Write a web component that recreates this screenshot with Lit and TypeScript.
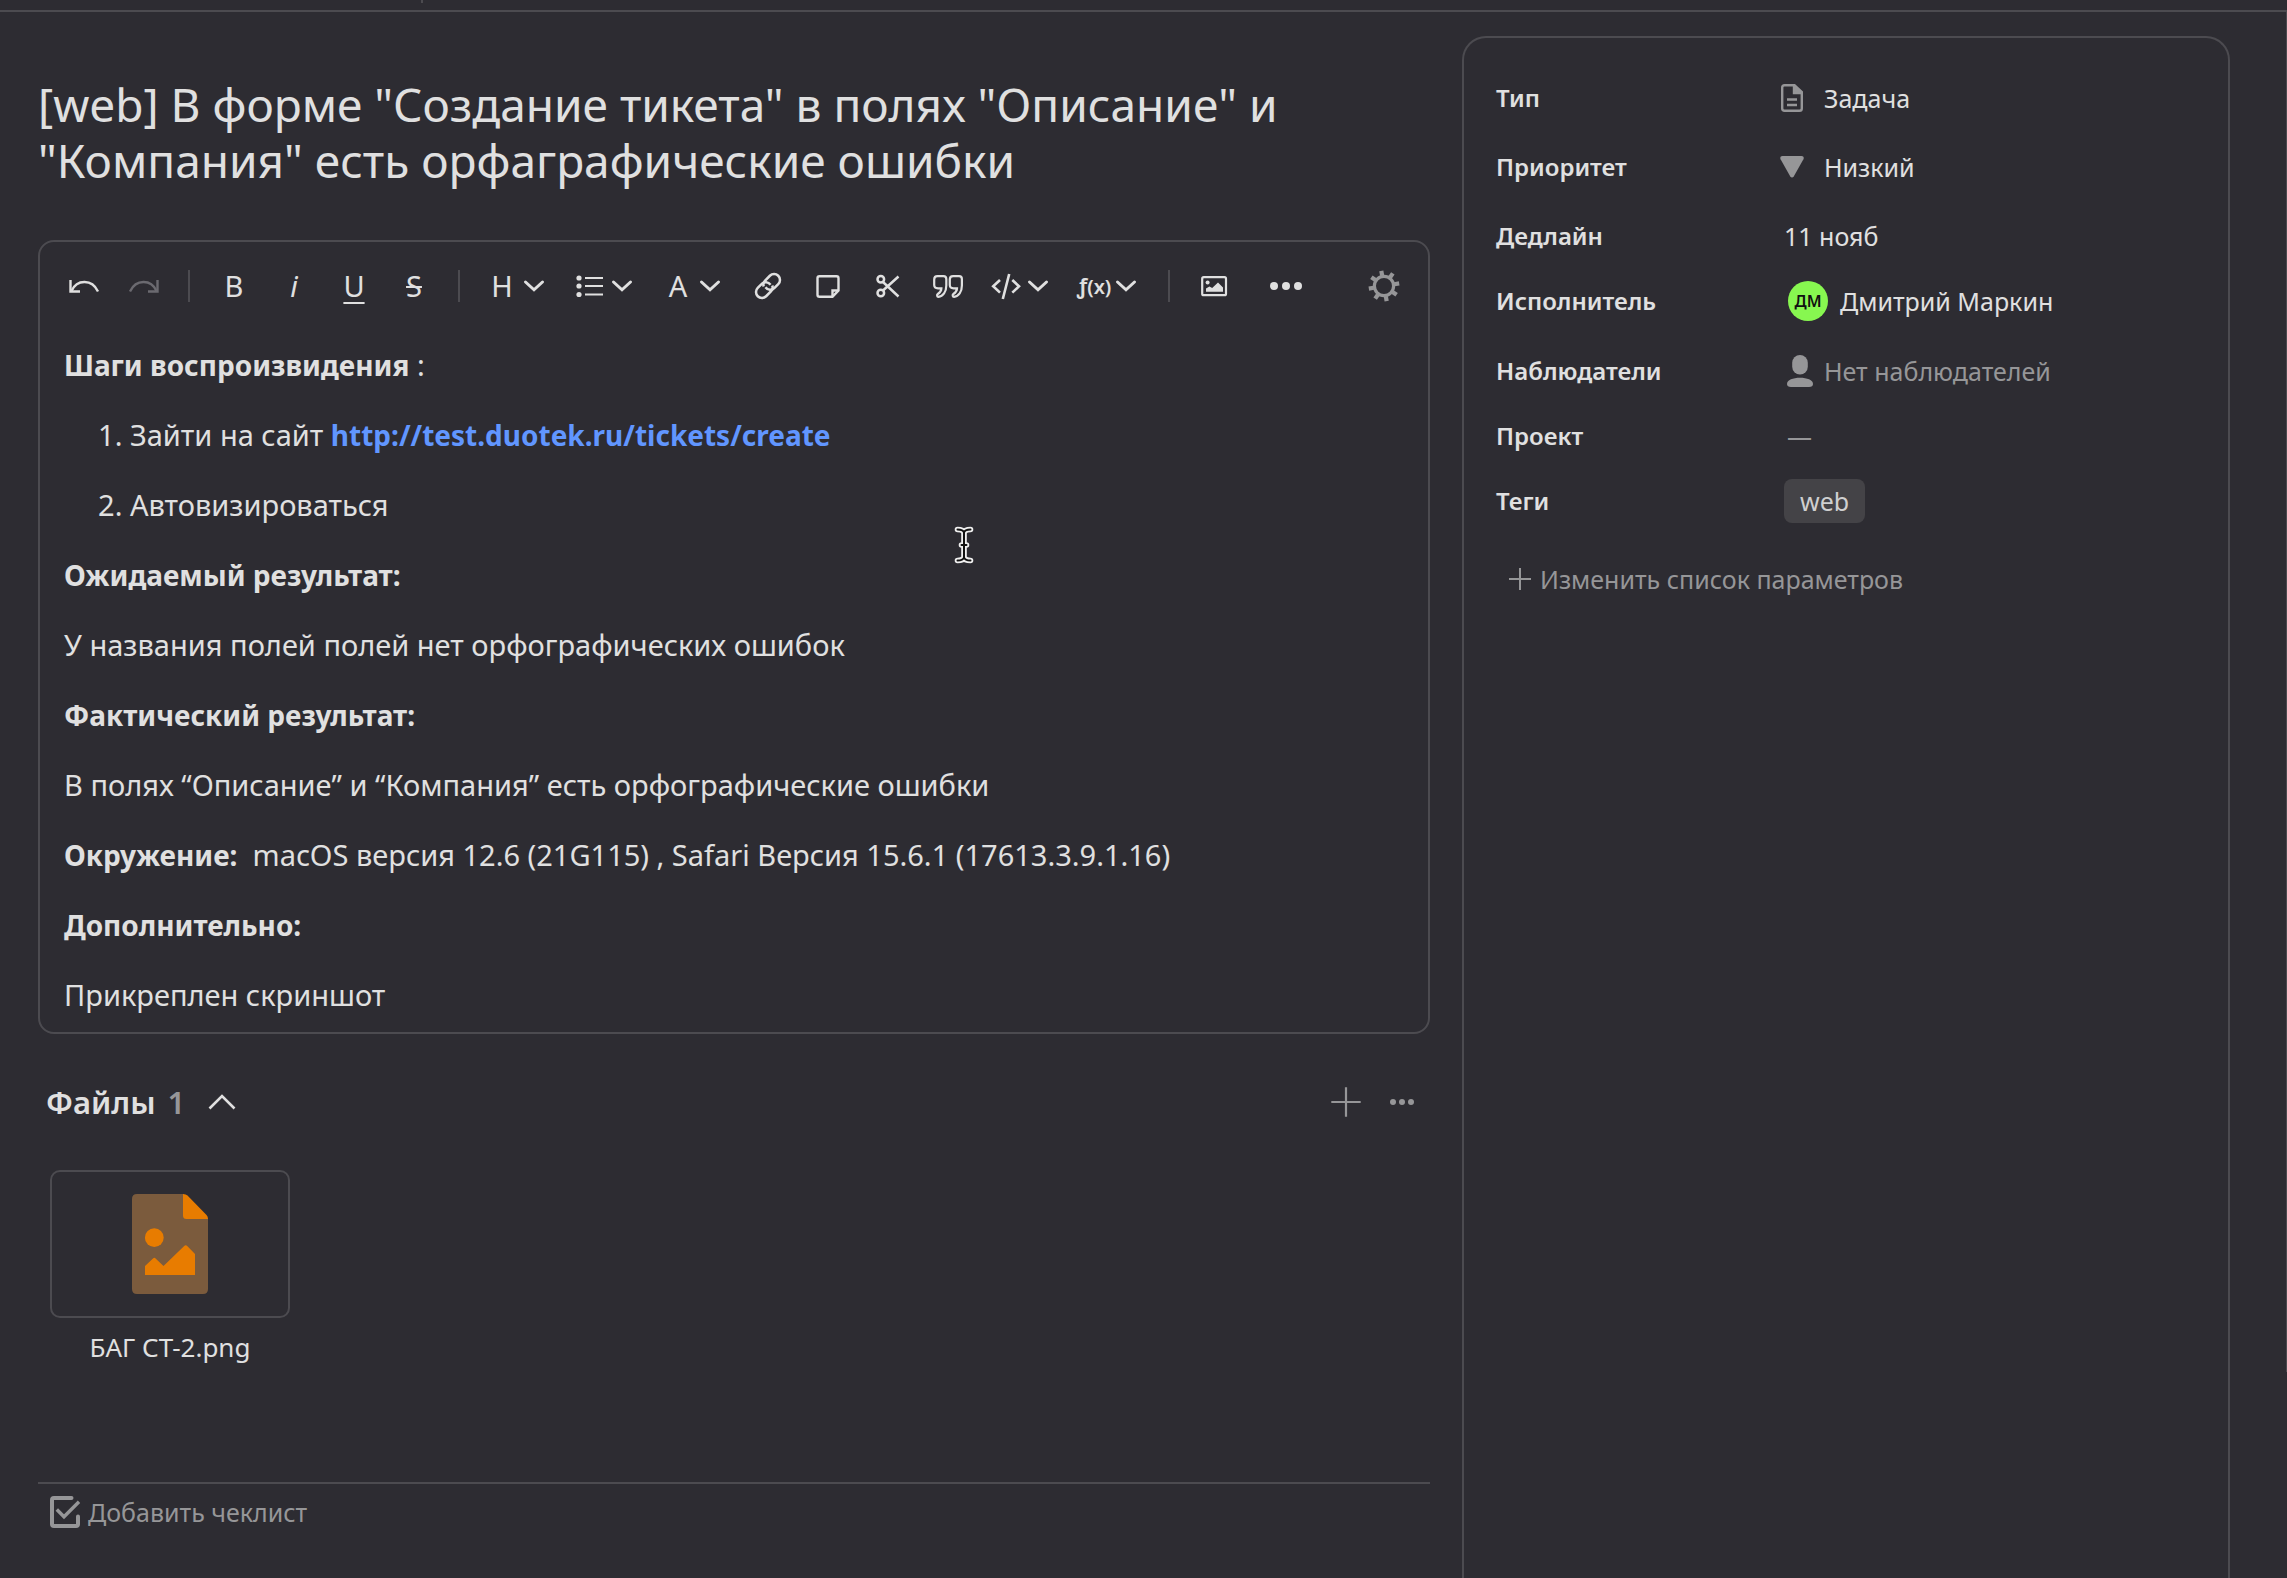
import { LitElement, html, css, svg, nothing, TemplateResult } from "lit";
import { customElement, property, state } from "lit/decorators.js";

const strokeIcon = (body: unknown, size = 32, width = 2) => html`<svg
  width=${size} height=${size} viewBox="0 0 ${size} ${size}" fill="none"
  stroke="currentColor" stroke-width=${width} aria-hidden="true">${body}</svg>`;

const icons = {
  undo: strokeIcon(svg`<path d="M2.5 10V21.5H12"/><path d="M3.5 21C9 9 24 9 30 21.5"/>`, 32, 2.4),
  redo: strokeIcon(svg`<path d="M29.5 10V21.5H20"/><path d="M28.5 21C23 9 8 9 2 21.5"/>`, 32, 2.4),
  list: strokeIcon(svg`
    <g fill="currentColor" stroke="none"><circle cx="5" cy="8" r="2.6"/><circle cx="5" cy="16" r="2.6"/><circle cx="5" cy="24.5" r="2.6"/></g>
    <path d="M11 8H29M11 16H29M11 24.5H29"/>`, 32, 2.2),
  link: html`<svg width="30" height="30" viewBox="0 0 24 24" fill="none" stroke="currentColor" stroke-width="2" aria-hidden="true">
    <path d="M10 13a4.6 4.6 0 0 0 7.2.5l3-3a4.6 4.6 0 0 0-6.7-6.7l-4 4a4.6 4.6 0 0 0-.9 4.6"/>
    <path d="M14 11a4.6 4.6 0 0 0-7.2-.5l-3 3a4.6 4.6 0 0 0 6.7 6.7l4-4a4.6 4.6 0 0 0 .9-4.6"/></svg>`,
  note: strokeIcon(svg`<path d="M7.5 6.3H24.5Q26.5 6.3 26.5 8.3V20.5L20.5 26.7H7.5Q5.5 26.7 5.5 24.7V8.3Q5.5 6.3 7.5 6.3Z"/><path d="M26.5 20.5H20.5V26.7"/>`, 32, 2.4),
  cut: strokeIcon(svg`<circle cx="8.8" cy="9.3" r="3.3"/><circle cx="8.8" cy="23" r="3.3"/><path d="M11 12L26.5 26.5M11 20.5L26.5 6.5"/>`, 32, 2.5),
  quote: strokeIcon(svg`
    <path d="M5.5 6.2H11.5Q14.3 6.2 14.3 9V15.5C14.3 22 11 26.3 6.4 26.8C5 26.8 4.6 24.8 5.8 24C8 22.6 9.3 20.8 9.4 18.4H6Q2.2 18.2 2.2 15V9.5Q2.2 6.2 5.5 6.2Z"/>
    <path transform="translate(15.6 0)" d="M5.5 6.2H11.5Q14.3 6.2 14.3 9V15.5C14.3 22 11 26.3 6.4 26.8C5 26.8 4.6 24.8 5.8 24C8 22.6 9.3 20.8 9.4 18.4H6Q2.2 18.2 2.2 15V9.5Q2.2 6.2 5.5 6.2Z"/>`, 32, 2.2),
  code: strokeIcon(svg`<path d="M10 10L3.2 16.3L10 22.6M22.3 10L29 16.3L22.3 22.6M19.2 4L12.8 29"/>`, 32, 2.6),
  image: strokeIcon(svg`<rect x="4.2" y="7.2" width="23.8" height="18" rx="1.5"/>
    <g fill="currentColor" stroke="none"><circle cx="9.6" cy="12.6" r="2"/><path d="M8 21.8V18.6L11.4 16.6 14.2 18 20 12.5 25 17.5V21.8Z"/></g>`, 32, 2.2),
  dots: html`<svg width="32" height="8" viewBox="0 0 32 8" fill="currentColor" aria-hidden="true"><circle cx="4" cy="4" r="4"/><circle cx="16" cy="4" r="4"/><circle cx="28" cy="4" r="4"/></svg>`,
  dotsSmall: html`<svg width="24" height="6" viewBox="0 0 24 6" fill="currentColor" aria-hidden="true"><circle cx="3" cy="3" r="3"/><circle cx="12" cy="3" r="3"/><circle cx="21" cy="3" r="3"/></svg>`,
  gear: strokeIcon(svg`<circle cx="16" cy="16" r="9.6" stroke-width="3.2"/>
    <g stroke-width="4.2">${[0, 45, 90, 135, 180, 225, 270, 315].map(
      (a) => svg`<path d="M16 5.6V0.6" transform="rotate(${a - 10} 16 16)"/>`)}</g>`),
  chevronDown: html`<svg class="chevron" width="24" height="14" viewBox="0 0 24 14" fill="none" stroke="currentColor" stroke-width="3" stroke-linecap="round" aria-hidden="true"><path d="M3.5 3L12 10.8L20.5 3"/></svg>`,
  chevronUp: html`<svg width="28" height="18" viewBox="0 0 28 18" fill="none" stroke="currentColor" stroke-width="2.6" aria-hidden="true"><path d="M1.5 15.5L14 3L26.5 15.5"/></svg>`,
  plus: strokeIcon(svg`<path d="M16 1.3V30.7M1.3 16H30.7"/>`, 32, 2.2),
  plusSmall: strokeIcon(svg`<path d="M12 1V23M1 12H23"/>`, 24, 2),
  task: html`<svg width="24" height="30" viewBox="0 0 24 30" fill="none" stroke="currentColor" stroke-width="2.4" aria-hidden="true">
    <path d="M4.5 2.2H14.5L21.8 9V25.5Q21.8 27.8 19.5 27.8H4.5Q2.2 27.8 2.2 25.5V4.5Q2.2 2.2 4.5 2.2Z"/>
    <path d="M14 2V10H22" fill="currentColor"/><path d="M7 16.5H17M7 22H17"/></svg>`,
  low: html`<svg width="26" height="24" viewBox="0 0 26 24" fill="currentColor" aria-hidden="true"><path d="M2.6 0H23.4Q26.6 0.4 25.4 3.5L15 22Q13 24.6 11 22L0.6 3.5Q-0.6 0.4 2.6 0Z"/></svg>`,
  person: html`<svg width="26" height="32" viewBox="0 0 26 32" fill="currentColor" aria-hidden="true"><rect x="5.2" y="0" width="15.6" height="19.5" rx="7.8"/><path d="M13 22.8C20 22.8 26 25 26 29Q26 32 22 32H4Q0 32 0 29C0 25 6 22.8 13 22.8Z"/></svg>`,
  checklist: html`<svg width="31" height="32" viewBox="0 0 31 32" fill="none" stroke="currentColor" stroke-width="4" aria-hidden="true"><path stroke-linecap="round" d="M21.5 2H4Q2 2 2 4V28Q2 30 4 30H26Q28 30 28 28V20.5"/><path stroke-width="3.4" d="M6.8 13.5L14 20.8L29 5.8"/></svg>`,
  picture: html`<svg width="76" height="100" viewBox="0 0 76 100" aria-hidden="true">
    <path fill="#7b5b3d" d="M5 0H51L76 25V95Q76 100 71 100H5Q0 100 0 95V5Q0 0 5 0Z"/>
    <path fill="#e87c00" d="M51 0Q54 0 55.5 1.5L74.5 21Q76 22.5 76 25H54.5Q51 25 51 21.5Z"/>
    <circle cx="22.3" cy="43.7" r="9.4" fill="#e87c00"/>
    <path fill="#e87c00" d="M13 81V72L21 64.4Q22.3 63.2 23.6 64.4L31.5 72L52.2 52Q53.7 50.6 55.2 52L63 60V81Z"/></svg>`,
  ibeam: html`<svg width="20" height="38" viewBox="0 0 20 38" fill="none" stroke-linecap="round" stroke-linejoin="round" aria-hidden="true">
    <path stroke="#f0f0f0" stroke-width="5.6" d="M3.5 3.5Q9 3.5 10 6.5Q11 3.5 16.5 3.5M10 6.5V31.5M7.5 19H12.5M3.5 34.5Q9 34.5 10 31.5Q11 34.5 16.5 34.5"/>
    <path stroke="#111" stroke-width="2" d="M3.5 3.5Q9 3.5 10 6.5Q11 3.5 16.5 3.5M10 6.5V31.5M7.5 19H12.5M3.5 34.5Q9 34.5 10 31.5Q11 34.5 16.5 34.5"/></svg>`,
};

type Tool = { label: string; face: unknown; menu?: boolean; disabled?: boolean; wide?: boolean } | "divider";

const tools: Tool[] = [
  { label: "Отменить", face: icons.undo },
  { label: "Повторить", face: icons.redo, disabled: true },
  "divider",
  { label: "Жирный", face: "B" },
  { label: "Курсив", face: html`<i>i</i>` },
  { label: "Подчёркнутый", face: html`<span class="under">U</span>` },
  { label: "Зачёркнутый", face: html`<span class="strike">S</span>` },
  "divider",
  { label: "Заголовок", face: "H", menu: true },
  { label: "Список", face: icons.list, menu: true },
  { label: "Цвет текста", face: "A", menu: true },
  { label: "Ссылка", face: icons.link },
  { label: "Заметка", face: icons.note },
  { label: "Кат", face: icons.cut },
  { label: "Цитата", face: icons.quote },
  { label: "Код", face: icons.code, menu: true },
  { label: "Формула", face: html`<span class="fx">ƒ<small>(x)</small></span>`, menu: true },
  "divider",
  { label: "Изображение", face: icons.image },
  { label: "Ещё", face: icons.dots, wide: true },
];

@customElement("editor-toolbar")
export class EditorToolbar extends LitElement {
  static styles = css`
    :host { display: flex; align-items: center; padding: 14px 14px 0; color: #e0e0e0; }
    button {
      display: flex; align-items: center; justify-content: center;
      flex: none; width: 60px; height: 60px; padding: 0; border: 0;
      background: none; color: inherit; font: 400 29px/40px "Noto Sans", sans-serif; cursor: pointer;
    }
    button:disabled { color: #6b6a70; }
    button.menu { width: 88px; padding: 0 14px 0 8px; justify-content: flex-start; }
    button.wide { width: 84px; }
    .face { display: flex; flex: none; justify-content: center; width: 40px; }
    .under { text-decoration: underline 2px; text-underline-offset: 5px; }
    .strike { text-decoration: line-through 2px; }
    .fx { font-weight: 600; font-size: 22px; line-height: 36px; white-space: nowrap; }
    small { font-size: 20px; }
    .chevron { flex: none; }
    .divider { flex: none; width: 2px; height: 32px; margin: 0 14px; background: #4c4b50; }
    .gear { margin-left: auto; color: #969698; }
  `;

  render() {
    return html`
      ${tools.map((t) =>
        t === "divider"
          ? html`<span class="divider"></span>`
          : html`<button class=${t.menu ? "menu" : t.wide ? "wide" : "plain"} aria-label=${t.label} ?disabled=${t.disabled}>
              <span class="face">${t.face}</span>${t.menu ? icons.chevronDown : nothing}
            </button>`,
      )}
      <button class="gear" aria-label="Настройки">${icons.gear}</button>
    `;
  }
}

type Param = { name: string; kind: string; icon?: TemplateResult; text: string; spacing?: string };

const params: Param[] = [
  { name: "Тип", kind: "icon", icon: icons.task, text: "Задача", spacing: "after" },
  { name: "Приоритет", kind: "icon", icon: icons.low, text: "Низкий", spacing: "after" },
  { name: "Дедлайн", kind: "date", text: "11 нояб" },
  { name: "Исполнитель", kind: "user", icon: html`<span class="avatar">ДМ</span>`, text: "Дмитрий Маркин" },
  { name: "Наблюдатели", kind: "empty", icon: icons.person, text: "Нет наблюдателей", spacing: "before" },
  { name: "Проект", kind: "empty", text: "—" },
  { name: "Теги", kind: "tag", text: "web" },
];

@customElement("ticket-params")
export class TicketParams extends LitElement {
  static styles = css`
    :host {
      display: block; box-sizing: border-box; padding: 40px 32px 0;
      border: 2px solid #4c4b50; border-bottom: 0; border-radius: 24px 24px 0 0;
      color: #e0e0e0; font: 400 25px/40px "Noto Sans", sans-serif;
    }
    dl { display: flex; flex-direction: column; gap: 25px; margin: 0 0 38px; }
    .row { display: grid; grid-template: 40px / 284px minmax(0, 1fr); }
    .after { margin-bottom: 4px; }
    .before { margin-top: 5px; }
    dt { font-size: 24px; font-weight: 600; }
    dd { display: flex; align-items: center; margin: 0; }
    .glyph { display: flex; flex: none; align-items: center; }
    .icon .glyph { justify-content: center; width: 24px; margin-right: 20px; color: #969698; }
    .date, .tag { padding-left: 4px; }
    .user { padding-left: 8px; gap: 12px; }
    .empty { padding-left: 7px; gap: 11px; color: #969698; }
    .avatar {
      display: grid; place-items: center; width: 40px; height: 40px; border-radius: 50%;
      background: #87f750; color: #111; font-size: 16px; font-weight: 600;
    }
    .tag .text { padding: 2px 16px; border-radius: 8px; background: #444347; color: #cfcfd0; }
    button {
      display: flex; align-items: center; gap: 8px; padding: 0 0 0 12px; border: 0;
      background: none; color: #969698; font: inherit; cursor: pointer;
    }
  `;

  render() {
    return html`
      <dl>
        ${params.map((p) => html`
          <div class="row ${p.spacing ?? ""}">
            <dt>${p.name}</dt>
            <dd class=${p.kind}>
              ${p.icon ? html`<span class="glyph">${p.icon}</span>` : nothing}<span class="text">${p.text}</span>
            </dd>
          </div>`)}
      </dl>
      <button>${icons.plusSmall}Изменить список параметров</button>
    `;
  }
}

@customElement("ticket-files")
export class TicketFiles extends LitElement {
  @property({ attribute: false }) files: string[] = [];
  @state() private open = true;

  static styles = css`
    :host { display: block; color: #e0e0e0; font: 400 26px/32px "Noto Sans", sans-serif; }
    button { display: grid; place-items: center; width: 40px; height: 40px; padding: 0; border: 0; background: none; color: inherit; cursor: pointer; }
    header { display: flex; align-items: center; padding: 0 8px; }
    h2 { margin: 0; font-size: 31px; line-height: 38px; font-weight: 600; }
    .count { margin-left: 12px; color: #969698; }
    .toggle { margin-left: 17px; }
    .actions { display: flex; gap: 16px; margin-left: auto; color: #969698; }
    ul { display: flex; flex-wrap: wrap; gap: 24px; margin: 48px 0 0; padding: 0 12px; list-style: none; }
    a { display: flex; flex-direction: column; gap: 13px; width: 240px; color: inherit; text-align: center; text-decoration: none; }
    .preview { display: grid; place-items: center; box-sizing: border-box; height: 148px; border: 2px solid #4c4b50; border-radius: 10px; }
  `;

  render() {
    return html`
      <header>
        <h2>Файлы<span class="count">${this.files.length}</span></h2>
        <button class="toggle" aria-label="Свернуть" @click=${() => (this.open = !this.open)}>${icons.chevronUp}</button>
        <div class="actions">
          <button aria-label="Добавить файл">${icons.plus}</button>
          <button aria-label="Ещё">${icons.dotsSmall}</button>
        </div>
      </header>
      ${this.open
        ? html`<ul>${this.files.map((f) => html`<li><a href="#file"><span class="preview">${icons.picture}</span>${f}</a></li>`)}</ul>`
        : nothing}
    `;
  }
}

@customElement("app-root")
export class AppRoot extends LitElement {
  static styles = css`
    :host {
      display: flex; flex-direction: column; position: relative; min-height: 100vh;
      background: #2d2c32; color: #e0e0e0; font: 400 29px/40px "Noto Sans", sans-serif;
    }
    .topbar { box-sizing: border-box; height: 12px; padding-left: 421px; border-bottom: 2px solid #4c4b50; }
    .tick { display: block; width: 2px; height: 3px; background: #4c4b50; }
    .layout {
      flex: 1; display: grid; grid-template-columns: minmax(0, 29fr) minmax(0, 16fr);
      column-gap: 32px; padding: 24px 57px 0 38px;
    }
    h1 { margin: 40px 0 52px; font-size: 46px; line-height: 56px; font-weight: 400; }
    .editor { position: relative; margin-bottom: 48px; border: 2px solid #4c4b50; border-radius: 16px; }
    .text { display: flex; flex-direction: column; gap: 30px; padding: 29px 24px 17px; outline: none; }
    p, ol { margin: 0; }
    ol { display: flex; flex-direction: column; gap: 30px; padding-left: 66px; }
    b, .text a { font-size: 28px; font-weight: 700; }
    .text a { color: #6196ff; text-decoration: none; }
    .cursor { position: absolute; left: 914px; top: 284px; line-height: 0; pointer-events: none; }
    .checklist { margin-top: 119px; padding: 12px; border-top: 2px solid #4c4b50; }
    .checklist button {
      display: flex; align-items: center; gap: 7px; padding: 0; border: 0; background: none;
      color: #969698; font: 400 25px/32px "Noto Sans", sans-serif; cursor: pointer;
    }
    .thumb { position: absolute; top: 12px; right: 0; width: 1px; height: 1360px; background: #4c4b50; }
  `;

  render() {
    return html`
      <div class="topbar"><span class="tick"></span></div>
      <div class="layout">
        <main>
          <h1>[web] В форме "Создание тикета" в полях "Описание" и "Компания" есть орфаграфические ошибки</h1>
          <section class="editor">
            <editor-toolbar></editor-toolbar>
            <div class="text" contenteditable="true" spellcheck="false" role="textbox" aria-multiline="true" aria-label="Описание">
              <p><b>Шаги воспроизвидения</b> :</p>
              <ol>
                <li>Зайти на сайт <a href="http://test.duotek.ru/tickets/create">http://test.duotek.ru/tickets/create</a></li>
                <li>Автовизироваться</li>
              </ol>
              <p><b>Ожидаемый результат:</b></p>
              <p>У названия полей полей нет орфографических ошибок</p>
              <p><b>Фактический результат:</b></p>
              <p>В полях “Описание” и “Компания” есть орфографические ошибки</p>
              <p><b>Окружение:</b>&nbsp; macOS версия 12.6 (21G115) , Safari Версия 15.6.1 (17613.3.9.1.16)</p>
              <p><b>Дополнительно:</b></p>
              <p>Прикреплен скриншот</p>
            </div>
            <span class="cursor">${icons.ibeam}</span>
          </section>
          <ticket-files .files=${["БАГ СТ-2.png"]}></ticket-files>
          <div class="checklist"><button>${icons.checklist}Добавить чеклист</button></div>
        </main>
        <ticket-params></ticket-params>
      </div>
      <span class="thumb"></span>
    `;
  }
}
